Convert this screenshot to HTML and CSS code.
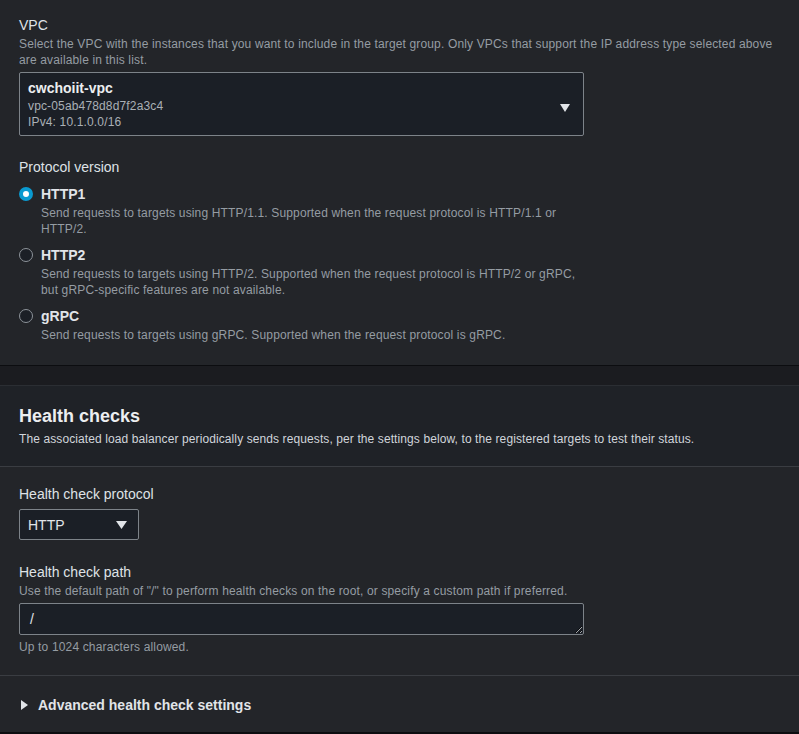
FILE: index.html
```html
<!DOCTYPE html>
<html lang="en">
<head>
<meta charset="utf-8">
<title>Target group settings</title>
<link rel="stylesheet" href="styles.css">
</head>
<body>
<div class="page">
  <section class="panel panel-top">
    <div class="field">
      <div class="label">VPC</div>
      <div class="desc">Select the VPC with the instances that you want to include in the target group. Only VPCs that support the IP address type selected above are available in this list.</div>
      <div class="select select-vpc">
        <div class="select-text">
          <div class="opt-name">cwchoiit-vpc</div>
          <div class="opt-meta">vpc-05ab478d8d7f2a3c4</div>
          <div class="opt-meta">IPv4: 10.1.0.0/16</div>
        </div>
        <svg class="caret" width="10" height="8" viewBox="0 0 10 8"><polygon points="0,0 10,0 5,8" fill="#e1e4e8"/></svg>
      </div>
    </div>

    <div class="field field-gap">
      <div class="label">Protocol version</div>
      <div class="radio-group">
        <div class="radio checked">
          <span class="dot"></span>
          <div class="radio-body">
            <div class="radio-label">HTTP1</div>
            <div class="desc">Send requests to targets using HTTP/1.1. Supported when the request protocol is HTTP/1.1 or HTTP/2.</div>
          </div>
        </div>
        <div class="radio">
          <span class="dot"></span>
          <div class="radio-body">
            <div class="radio-label">HTTP2</div>
            <div class="desc">Send requests to targets using HTTP/2. Supported when the request protocol is HTTP/2 or gRPC, but gRPC-specific features are not available.</div>
          </div>
        </div>
        <div class="radio">
          <span class="dot"></span>
          <div class="radio-body">
            <div class="radio-label">gRPC</div>
            <div class="desc">Send requests to targets using gRPC. Supported when the request protocol is gRPC.</div>
          </div>
        </div>
      </div>
    </div>
  </section>

  <div class="spacer"></div>

  <section class="panel panel-health">
    <header class="panel-header">
      <h2>Health checks</h2>
      <div class="header-desc">The associated load balancer periodically sends requests, per the settings below, to the registered targets to test their status.</div>
    </header>
    <div class="panel-body">
      <div class="field">
        <div class="label">Health check protocol</div>
        <div class="select select-small">
          <span class="small-value">HTTP</span>
          <svg class="caret" width="11" height="8" viewBox="0 0 11 8"><polygon points="0,0 11,0 5.5,8" fill="#e1e4e8"/></svg>
        </div>
      </div>
      <div class="field field-gap-lg">
        <div class="label">Health check path</div>
        <div class="desc">Use the default path of "/" to perform health checks on the root, or specify a custom path if preferred.</div>
        <textarea class="path-input" rows="1">/</textarea>
        <div class="desc hint">Up to 1024 characters allowed.</div>
      </div>
    </div>
    <div class="expander">
      <svg class="expand-icon" width="7" height="10" viewBox="0 0 7 10"><polygon points="0,0 7,5 0,10" fill="#e1e4e8"/></svg>
      <span>Advanced health check settings</span>
    </div>
  </section>
</div>
</body>
</html>
```

FILE: styles.css
```css
* { box-sizing: border-box; }

html, body {
  margin: 0;
  padding: 0;
  background: #0c0d10;
}

body {
  font-family: "Liberation Sans", Arial, sans-serif;
  color: #e1e4e8;
  width: 799px;
  height: 734px;
  overflow: hidden;
}

.page {
  display: flex;
  flex-direction: column;
}

.panel {
  background: #232529;
}

.panel-top {
  padding: 14px 20px 22px 19px;
  border-bottom: 1px solid #0c0d10;
}

.spacer {
  height: 19px;
  background: #1b1c20;
}

.panel-health {
  border-top: 1px solid #2b2e33;
  border-bottom: 1px solid #0c0d10;
}

.field-gap { margin-top: 20px; }
.field-gap-lg { margin-top: 21px; }

.label {
  font-size: 14px;
  line-height: 22px;
  color: #dfe2e6;
}

.desc {
  font-size: 12px;
  line-height: 16px;
  letter-spacing: 0.15px;
  color: #959ca3;
}

.select {
  display: flex;
  align-items: center;
  justify-content: space-between;
  background: #1b1f26;
  border: 1px solid #7d8389;
  border-radius: 2px;
}

.select-vpc {
  width: 565px;
  height: 64px;
  margin-top: 4px;
  padding: 5px 13px 4px 8px;
  align-items: flex-start;
}

.select-vpc .caret { margin-top: 26px; }

.opt-name {
  font-size: 14px;
  line-height: 20px;
  font-weight: 700;
  color: #eceef0;
}

.opt-meta {
  font-size: 12px;
  line-height: 16px;
  letter-spacing: 0.15px;
  color: #aab0b6;
}

.radio-group {
  display: flex;
  flex-direction: column;
  gap: 7px;
  margin-top: 5px;
  width: 565px;
}

.radio {
  display: flex;
  gap: 8px;
}

.dot {
  flex: none;
  width: 14px;
  height: 14px;
  margin-top: 4px;
  border-radius: 50%;
  border: 1.5px solid #8d9399;
  background: #1b1f26;
}

.radio.checked .dot {
  border: 4px solid #0a9ad0;
  background: #ffffff;
}

.radio-label {
  font-size: 14px;
  line-height: 22px;
  font-weight: 700;
  color: #e1e4e8;
}

.panel-header {
  background: #1f2227;
  padding: 18px 20px 19px 19px;
  border-bottom: 1px solid #3a3d42;
}

.panel-header h2 {
  margin: 0;
  font-size: 18px;
  line-height: 24px;
  font-weight: 700;
  color: #eceef0;
}

.header-desc {
  margin-top: 3px;
  font-size: 12px;
  line-height: 16px;
  letter-spacing: 0.1px;
  color: #d1d5db;
}

.panel-body {
  padding: 16px 20px 20px 19px;
  border-bottom: 1px solid #3a3d42;
}

.select-small {
  width: 120px;
  height: 31px;
  margin-top: 4px;
  padding: 0 11px 0 8px;
}

.small-value {
  font-size: 14px;
  color: #e1e4e8;
}

.path-input {
  display: block;
  width: 565px;
  height: 32px;
  margin: 4px 0 0;
  padding: 6px 10px;
  font-family: "Liberation Sans", Arial, sans-serif;
  font-size: 14px;
  line-height: 18px;
  color: #e1e4e8;
  background: #1b1f26;
  border: 1px solid #7d8389;
  border-radius: 2px;
  resize: vertical;
  overflow: hidden;
}

.hint { margin-top: 4px; }

.expander {
  display: flex;
  align-items: center;
  gap: 10px;
  padding: 18px 20px 16px 21px;
  font-size: 14px;
  line-height: 22px;
  font-weight: 700;
  color: #e1e4e8;
}
```
